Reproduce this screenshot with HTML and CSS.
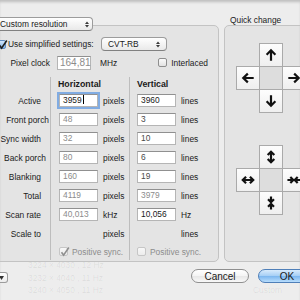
FILE: index.html
```html
<!DOCTYPE html>
<html>
<head>
    <meta charset="UTF-8">
    <title>Custom resolution</title>
    <link rel="stylesheet" href="styles.css">
</head>
<body>

    <!-- window behind the sheet, shows through faintly -->
    <div class="behind">
        <div class="ghost-list">
            <div>3224 × 4030 , 12 Hz</div>
            <div>3232 × 4040 , 11 Hz</div>
            <div>3240 × 4050 , 11 Hz</div>
        </div>
        <div class="ghost-kind">
            <div>Custom</div>
        </div>
    </div>

    <div class="sheet">
        <div class="panels">
            <div class="box settings">
                <div class="popup mode">
                    <span>Custom resolution</span>
                    <svg class="updown" viewBox="0 0 4 7"><path d="M0 3L2 0.5L4 3Z M0 4L2 6.5L4 4Z"/></svg>
                </div>

                <div class="row simple">
                    <span class="check on"><svg class="tick" viewBox="0 0 9 9"><path d="M1.5 4.2L3.6 7.2L8.8 -0.5"/></svg></span>
                    <span class="simple-label">Use simplified settings:</span>
                    <div class="popup cvt">
                        <span>CVT-RB</span>
                        <svg class="updown" viewBox="0 0 4 7"><path d="M0 3L2 0.5L4 3Z M0 4L2 6.5L4 4Z"/></svg>
                    </div>
                </div>

                <div class="row clock">
                    <span class="clock-label">Pixel clock</span>
                    <span class="field big dim">164,81</span>
                    <span class="unit-mhz">MHz</span>
                    <span class="check interlace"></span>
                    <span class="check-label">Interlaced</span>
                </div>

                <div class="timing">
                    <div class="sep a"></div>
                    <div class="sep b"></div>

                    <div class="corner"></div>
                    <div class="head hc">Horizontal</div>
                    <div class="head vc">Vertical</div>

                    <div class="lbl">Active</div>
                    <div class="hc"><span class="field focus">3959<span class="caret"></span></span><span class="unit">pixels</span></div>
                    <div class="vc"><span class="field">3960</span><span class="unit">lines</span></div>

                    <div class="lbl fp">Front porch</div>
                    <div class="hc"><span class="field dim">48</span><span class="unit">pixels</span></div>
                    <div class="vc"><span class="field mid">3</span><span class="unit">lines</span></div>

                    <div class="lbl">Sync width</div>
                    <div class="hc"><span class="field dim">32</span><span class="unit">pixels</span></div>
                    <div class="vc"><span class="field mid">10</span><span class="unit">lines</span></div>

                    <div class="lbl bp">Back porch</div>
                    <div class="hc"><span class="field dim">80</span><span class="unit">pixels</span></div>
                    <div class="vc"><span class="field mid">6</span><span class="unit">lines</span></div>

                    <div class="lbl">Blanking</div>
                    <div class="hc"><span class="field dim">160</span><span class="unit">pixels</span></div>
                    <div class="vc"><span class="field mid">19</span><span class="unit">lines</span></div>

                    <div class="lbl">Total</div>
                    <div class="hc"><span class="field dim">4119</span><span class="unit">pixels</span></div>
                    <div class="vc"><span class="field dim">3979</span><span class="unit">lines</span></div>

                    <div class="lbl">Scan rate</div>
                    <div class="hc"><span class="field dim">40,013</span><span class="unit">kHz</span></div>
                    <div class="vc"><span class="field">10,056</span><span class="unit">Hz</span></div>

                    <div class="lbl">Scale to</div>
                    <div class="hc"><span class="field hidden"></span><span class="unit">pixels</span></div>
                    <div class="vc"><span class="field hidden"></span><span class="unit">lines</span></div>

                    <div class="lbl"></div>
                    <div class="hc"><span class="check dis"><svg class="tick" viewBox="0 0 9 9"><path d="M1.5 4.2L3.6 7.2L8.8 -0.5"/></svg></span><span class="psync">Positive sync.</span></div>
                    <div class="vc"><span class="check dis"></span><span class="psync">Positive sync.</span></div>
                </div>
            </div>

            <div class="quick">
                <div class="quick-title">Quick change</div>
                <div class="box pad">
                    <div class="cross">
                        <div class="key k-up"><svg class="ico" viewBox="0 0 16 16"><path d="M8 14.5V3M3 7.8L8 2.6L13 7.8"/></svg></div>
                        <div class="key k-left"><svg class="ico" viewBox="0 0 16 16"><path d="M14.5 8H3M7.8 3L2.6 8L7.8 13"/></svg></div>
                        <div class="key k-mid"></div>
                        <div class="key k-right"><svg class="ico" viewBox="0 0 16 16"><path d="M1.5 8H13M8.2 3L13.4 8L8.2 13"/></svg></div>
                        <div class="key k-down"><svg class="ico" viewBox="0 0 16 16"><path d="M8 1.5V13M3 8.2L8 13.4L13 8.2"/></svg></div>
                    </div>
                    <div class="cross">
                        <div class="key k-up"><svg class="ico" viewBox="0 0 16 16"><path d="M8 3V13M4.2 5.8L8 2L11.8 5.8M4.2 10.2L8 14L11.8 10.2"/></svg></div>
                        <div class="key k-left"><svg class="ico" viewBox="0 0 16 16"><path d="M3 8H13M5.8 4.2L2 8L5.8 11.8M10.2 4.2L14 8L10.2 11.8"/></svg></div>
                        <div class="key k-mid"></div>
                        <div class="key k-right"><svg class="ico" viewBox="0 0 16 16"><path d="M0.5 8H6M3.8 4.6L7.2 8L3.8 11.4M15.5 8H10M12.2 4.6L8.8 8L12.2 11.4"/></svg></div>
                        <div class="key k-down"><svg class="ico" viewBox="0 0 16 16"><path d="M8 0.5V6M4.6 3.8L8 7.2L11.4 3.8M8 15.5V10M4.6 12.2L8 8.8L11.4 12.2"/></svg></div>
                    </div>
                </div>
            </div>
        </div>

        <div class="footer">
            <div class="mini"><svg class="down-tri" viewBox="0 0 5 4"><path d="M0 0H5L2.5 4Z"/></svg></div>
            <div class="btn cancel">Cancel</div>
            <div class="btn ok">OK</div>
        </div>
    </div>

</body>
</html>
```

FILE: styles.css
```css
body {
    margin: 0;
    width: 300px;
    height: 300px;
    overflow: hidden;
    position: relative;
    background: #ededed;
    font-family: "Liberation Sans", Arial, sans-serif;
    font-size: 8.4px;
    color: #1a1a1a;
    box-shadow: inset 0 3px 3px -1px rgba(0, 0, 0, 0.2);
}

/* faint window behind the sheet */
.behind {
    position: absolute;
    left: 0;
    top: 0;
    width: 300px;
    height: 300px;
    display: flex;
    color: rgba(0, 0, 0, 0.08);
    line-height: 12.5px;
}

.ghost-list {
    box-sizing: border-box;
    width: 225px;
    padding: 259px 0 0 28px;
}

.ghost-kind {
    margin-left: 28px;
    padding-top: 284px;
}

.sheet {
    position: relative;
    width: 345px;
    margin-left: -11px;
    padding-top: 15px;
}

.panels {
    display: flex;
    gap: 5px;
}

.box {
    box-sizing: border-box;
    border: 1px solid #c3c3c3;
    border-radius: 5px;
    background: rgba(0, 0, 0, 0.035);
}

.settings {
    width: 230px;
    margin-top: 10px;
    padding: 0 0 1px 10px;
}

.quick {
    display: flex;
    flex-direction: column;
    width: 110px;
}

.quick-title {
    height: 10px;
    line-height: 10px;
    padding-left: 6px;
}

.pad {
    flex: 1;
    padding: 17px 0 0 11px;
}

/* popup buttons */
.popup {
    display: flex;
    align-items: center;
    box-sizing: border-box;
    height: 14px;
    border: 1px solid #9c9c9c;
    border-bottom-color: #818181;
    border-radius: 4px;
    background: linear-gradient(#ffffff, #f3f3f3 55%, #e9e9e9);
}

.updown {
    width: 4px;
    height: 7px;
    margin-left: auto;
    fill: #3a3a3a;
}

.mode {
    width: 99px;
    margin: -9px 0 0 -6px;
    padding: 0 3px 0 5px;
}

.cvt {
    width: 66px;
    margin-left: 1px;
    padding: 0 6px;
}

.row {
    display: flex;
    align-items: center;
}

.simple {
    height: 14px;
    margin-top: 6px;
}

.simple-label {
    width: 92px;
    margin-left: 2px;
}

/* checkboxes */
.check {
    flex: none;
    box-sizing: border-box;
    width: 9px;
    height: 9px;
    border: 1px solid #8e8e8e;
    border-radius: 2px;
    background: linear-gradient(#fbfbfb, #e2e2e2);
}

.check.on {
    margin-left: -3px;
    border-color: #5d8ac0;
    background: linear-gradient(#d3e7fb, #7db1ea);
}

.check.dis {
    border-color: #c6c6c6;
    background: linear-gradient(#f8f8f8, #ececec);
}

.tick {
    display: block;
    width: 9px;
    height: 9px;
    overflow: visible;
    fill: none;
    stroke: #1d1d1d;
    stroke-width: 1.6;
}

.check.dis .tick {
    stroke: #8e8e8e;
}

.clock {
    height: 15px;
    margin-top: 4px;
}

.clock-label {
    width: 50px;
    text-align: right;
}

/* text fields */
.field {
    flex: none;
    box-sizing: border-box;
    width: 39px;
    height: 13px;
    padding: 0 3px;
    border: 1px solid #b5b5b5;
    border-top-color: #909090;
    background: #ffffff;
    line-height: 11px;
    white-space: nowrap;
}

.field.big {
    width: 34px;
    height: 14px;
    margin-left: 7px;
    padding-left: 2px;
    font-size: 10px;
    line-height: 12px;
}

.field.focus {
    box-shadow: 0 0 0 2px rgba(96, 154, 226, 0.75);
}

.field.hidden {
    visibility: hidden;
}

.caret {
    display: inline-block;
    width: 1px;
    height: 9px;
    margin-left: 1px;
    background: #000000;
    vertical-align: -1px;
}

.dim {
    color: #8c8c8c;
}

.mid {
    color: #4a4a4a;
}

.unit-mhz {
    margin-left: 9px;
}

.interlace {
    margin-left: 41px;
}

.check-label {
    margin-left: 4px;
}

/* timing grid */
.timing {
    display: grid;
    grid-template-columns: 50px 1px 78px 1px 1fr;
    grid-template-rows: 14px repeat(8, 19px) 17px;
    margin-top: 7px;
}

.sep {
    grid-row: 1 / -1;
    background: #bdbdbd;
}

.sep.a {
    grid-column: 2;
}

.sep.b {
    grid-column: 4;
}

.corner {
    grid-column: 1;
}

.head {
    font-weight: bold;
    font-size: 8.8px;
}

.lbl {
    grid-column: 1;
    align-self: center;
    padding-right: 9px;
    text-align: right;
    white-space: nowrap;
}

.lbl.fp {
    padding-right: 1px;
}

.lbl.bp {
    padding-right: 4px;
}

.hc {
    grid-column: 3;
    display: flex;
    align-items: center;
    padding-left: 8px;
}

.vc {
    grid-column: 5;
    display: flex;
    align-items: center;
    padding-left: 7px;
}

.head.hc {
    padding-left: 7px;
}

.unit {
    margin-left: 5px;
}

.psync {
    margin-left: 4px;
    color: #8c8c8c;
    white-space: nowrap;
}

/* quick change arrows */
.cross {
    display: grid;
    grid-template-columns: repeat(3, 23px);
    grid-template-rows: repeat(3, 23px);
}

.cross + .cross {
    margin-top: 33px;
}

.key {
    box-sizing: border-box;
    width: 24px;
    height: 24px;
    display: flex;
    align-items: center;
    justify-content: center;
    border: 1px solid #aaaaaa;
    background: linear-gradient(#fdfdfd, #efefef);
}

.k-up {
    grid-area: 1 / 2;
}

.k-left {
    grid-area: 2 / 1;
}

.k-mid {
    grid-area: 2 / 2;
    background: #dddddd;
}

.k-right {
    grid-area: 2 / 3;
}

.k-down {
    grid-area: 3 / 2;
}

.ico {
    width: 14px;
    height: 14px;
    fill: none;
    stroke: #111111;
    stroke-width: 2.5;
}

/* bottom buttons */
.footer {
    display: flex;
    align-items: flex-start;
    margin-top: 7px;
}

.mini {
    box-sizing: border-box;
    width: 19px;
    height: 11px;
    margin-top: 3px;
    display: flex;
    align-items: center;
    justify-content: flex-end;
    padding-right: 3px;
    border: 1px solid #9c9c9c;
    border-left: none;
    border-radius: 0 3px 3px 0;
    background: linear-gradient(#ffffff, #ececec);
}

.down-tri {
    width: 5px;
    height: 4px;
    fill: #333333;
}

.btn {
    box-sizing: border-box;
    width: 58px;
    height: 14px;
    display: flex;
    align-items: center;
    justify-content: center;
    border-radius: 7px;
    font-size: 10px;
}

.cancel {
    margin-left: 183px;
    border: 1px solid #8f8f8f;
    background: linear-gradient(#ffffff, #f4f4f4 50%, #e7e7e7 51%, #f8f8f8);
}

.ok {
    margin-left: 9px;
    border: 1px solid #4f7fb8;
    background: linear-gradient(#d8ebfc, #a5cef5 50%, #7bb6ef 51%, #b8ddfc);
}
```
